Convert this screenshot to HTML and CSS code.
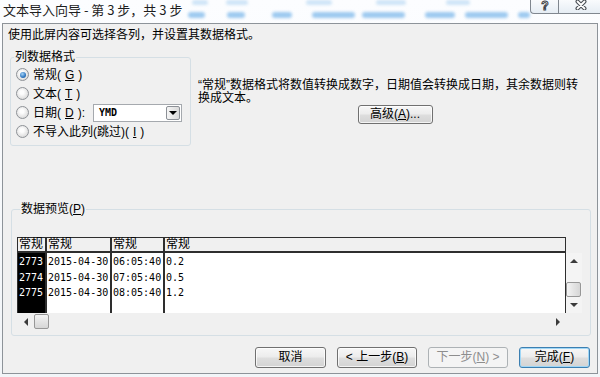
FILE: index.html
```html
<!DOCTYPE html>
<html lang="zh-CN">
<head>
    <meta charset="UTF-8">
    <title>文本导入向导 - 第 3 步，共 3 步</title>
    <link rel="stylesheet" href="styles.css">
</head>
<body>
    <div class="window">
        <div class="titlebar">
            <div class="title">文本导入向导 - 第 3 步，共 3 步</div>
            <div class="glass">
                <div class="glass-row top"><span></span><span></span><span></span><span></span><span></span></div>
                <div class="glass-row bottom"><span></span><span></span><span></span><span></span><span></span><span></span><span></span><span></span></div>
            </div>
            <div class="caption">
                <div class="cap-btn cap-help"><span>?</span></div>
                <div class="cap-btn cap-close">
                    <svg width="12" height="10" viewBox="0 0 12 10">
                        <path d="M2.5 1.5 L9.5 8.5 M9.5 1.5 L2.5 8.5" stroke="#4a4f55" stroke-width="4" stroke-linecap="round"/>
                        <path d="M2.5 1.5 L9.5 8.5 M9.5 1.5 L2.5 8.5" stroke="#fff" stroke-width="1.8" stroke-linecap="round"/>
                    </svg>
                </div>
            </div>
        </div>

        <div class="client">
            <p class="intro">使用此屏内容可选择各列，并设置其数据格式。</p>

            <div class="upper">
                <fieldset class="group format">
                    <legend>列数据格式</legend>
                    <label class="opt"><span class="radio on"></span>常规(<u>G</u>)</label>
                    <label class="opt"><span class="radio"></span>文本(<u>T</u>)</label>
                    <label class="opt"><span class="radio"></span>日期(<u>D</u>):
                        <span class="combo"><span class="combo-val">YMD</span><span class="combo-btn"></span></span>
                    </label>
                    <label class="opt"><span class="radio"></span>不导入此列(跳过)(<u>I</u>)</label>
                </fieldset>

                <div class="desc">
                    <p>“常规”数据格式将数值转换成数字，日期值会转换成日期，其余数据则转换成文本。</p>
                    <button class="btn adv">高级(<u>A</u>)...</button>
                </div>
            </div>

            <fieldset class="group preview">
                <legend>数据预览(<u>P</u>)</legend>
                <div class="grid">
                    <div class="sheet">
                        <div class="col c1">
                            <div class="head">常规</div>
                            <div class="cells"><div class="cell">2773</div><div class="cell">2774</div><div class="cell">2775</div></div>
                        </div>
                        <div class="col c2">
                            <div class="head">常规</div>
                            <div class="cells"><div class="cell">2015-04-30</div><div class="cell">2015-04-30</div><div class="cell">2015-04-30</div></div>
                        </div>
                        <div class="col c3">
                            <div class="head">常规</div>
                            <div class="cells"><div class="cell">06:05:40</div><div class="cell">07:05:40</div><div class="cell">08:05:40</div></div>
                        </div>
                        <div class="col c4">
                            <div class="head">常规</div>
                            <div class="cells"><div class="cell">0.2</div><div class="cell">0.5</div><div class="cell">1.2</div></div>
                        </div>
                    </div>
                    <div class="vscroll">
                        <span class="arrow up"></span>
                        <span class="thumb"></span>
                        <span class="arrow down"></span>
                    </div>
                    <div class="hscroll">
                        <span class="arrow left"></span>
                        <span class="thumb"></span>
                        <span class="arrow right"></span>
                    </div>
                </div>
            </fieldset>

            <div class="actions">
                <button class="btn small">取消</button>
                <button class="btn">&lt; 上一步(<u>B</u>)</button>
                <button class="btn" disabled>下一步(<u>N</u>) &gt;</button>
                <button class="btn small default">完成(<u>F</u>)</button>
            </div>
        </div>
    </div>
</body>
</html>
```

FILE: styles.css
```css
* {
    box-sizing: border-box;
}
body {
    margin: 0;
    background: #f4f7fa;
    font-family: "Liberation Sans", "Noto Sans CJK SC", sans-serif;
    font-size: 12px;
    color: #000;
}
.window {
    width: 600px;
    height: 377px;
    display: flex;
    flex-direction: column;
    overflow: hidden;
    background: linear-gradient(#fcfdff, #f2f5f8);
}

/* title bar */
.titlebar {
    height: 23px;
    flex-shrink: 0;
    display: flex;
    align-items: flex-start;
}
.title {
    padding: 1px 0 0 3px;
    font-family: "Noto Sans CJK SC", sans-serif;
    font-size: 13px;
    line-height: 17px;
    white-space: nowrap;
    color: #1e1e1e;
}
.glass {
    flex: 1;
    display: flex;
    flex-direction: column;
    gap: 7px;
    padding: 0 0 0 4px;
    filter: blur(1.6px);
    opacity: .8;
}
.glass-row {
    display: flex;
    height: 5px;
}
.glass-row span {
    height: 100%;
    border-radius: 3px;
    background: #86bdec;
}
.glass-row.top span { background: #c3def5; }
.glass-row.top span:nth-child(1) { width: 16px; margin-left: 6px; }
.glass-row.top span:nth-child(2) { width: 22px; margin-left: 18px; }
.glass-row.top span:nth-child(3) { width: 26px; margin-left: 58px; }
.glass-row.top span:nth-child(4) { width: 30px; margin-left: 44px; }
.glass-row.top span:nth-child(5) { width: 24px; margin-left: 40px; }
.glass-row.bottom { height: 6px; }
.glass-row.bottom span:nth-child(1) { width: 17px; margin-left: 2px; }
.glass-row.bottom span:nth-child(2) { width: 18px; margin-left: 22px; }
.glass-row.bottom span:nth-child(3) { width: 20px; margin-left: 27px; }
.glass-row.bottom span:nth-child(4) { width: 43px; margin-left: 20px; }
.glass-row.bottom span:nth-child(5) { width: 43px; margin-left: 7px; }
.glass-row.bottom span:nth-child(6) { width: 30px; margin-left: 20px; }
.glass-row.bottom span:nth-child(7) { width: 43px; margin-left: 10px; }
.glass-row.bottom span:nth-child(8) { width: 12px; margin-left: 10px; }
.caption {
    display: flex;
    margin-right: 3px;
}
.cap-btn {
    height: 14px;
    border: 1px solid #80878f;
    border-top: 0;
    background: linear-gradient(#f9fbfd, #e6edf4);
    display: flex;
    justify-content: center;
    align-items: flex-start;
}
.cap-help {
    width: 28px;
    border-right: 0;
    border-radius: 0 0 0 4px;
}
.cap-help span {
    font: bold 12px/13px "Liberation Sans", sans-serif;
    color: #fff;
    -webkit-text-stroke: 1px #3d4248;
}
.cap-close {
    width: 45px;
    border-radius: 0 0 4px 0;
}

/* dialog body */
.client {
    flex: 1;
    margin: 0 2px 3px 2px;
    border: 1px solid #8d9399;
    background: #f0f0f0;
    display: flex;
    flex-direction: column;
}
.intro {
    margin: 4px 0 0 5px;
    line-height: 14px;
}
.upper {
    display: flex;
    margin-top: 8px;
}
.group {
    margin: 0;
    padding: 0;
    min-width: 0;
    border: 1px solid #d5dfe5;
    border-radius: 3px;
}
.group legend {
    margin-left: 3px;
    padding: 0 1px;
    line-height: 14px;
}
.format {
    width: 181px;
    margin-left: 7px;
    padding: 1px 0 4px;
}
.opt {
    display: flex;
    align-items: center;
    gap: 4px;
    height: 19px;
    padding-left: 5px;
    line-height: 14px;
    white-space: nowrap;
}
.radio {
    flex: none;
    width: 13px;
    height: 13px;
    border: 1px solid #8e9297;
    border-radius: 50%;
    background: radial-gradient(circle at 45% 40%, #fdfdfd 20%, #dcdcdc 75%, #c8c8c8);
    display: grid;
    place-items: center;
}
.radio.on::after {
    content: "";
    width: 6px;
    height: 6px;
    border-radius: 50%;
    background: radial-gradient(circle at 40% 35%, #a5d3f7, #2f77c0 60%, #1a4f8a);
}
.combo {
    display: flex;
    width: 89px;
    height: 18px;
    margin: 0 8px 0 auto;
    border: 1px solid #a5a9ae;
    background: #fff;
}
.combo-val {
    flex: 1;
    padding-left: 5px;
    font: bold 10px/16px "DejaVu Sans Mono", monospace;
}
.combo-btn {
    width: 14px;
    margin: 1px;
    border: 1px solid #8c9096;
    border-radius: 2px;
    background: linear-gradient(90deg, #f5f5f5, #dadada);
    display: grid;
    place-items: center;
}
.combo-btn::after {
    content: "";
    border-left: 4px solid transparent;
    border-right: 4px solid transparent;
    border-top: 4px solid #000;
}
.desc {
    width: 394px;
    margin-left: 7px;
    padding-top: 29px;
    display: flex;
    flex-direction: column;
    align-items: center;
}
.desc p {
    width: 388px;
    margin: 0;
    align-self: flex-start;
    line-height: 13px;
}

/* buttons */
.btn {
    height: 21px;
    width: 80px;
    padding: 0;
    font: inherit;
    line-height: 17px;
    color: #000;
    border: 1px solid #707070;
    border-radius: 3px;
    background: linear-gradient(#f7f7f7, #ececec 48%, #dedede 52%, #d3d3d3);
    box-shadow: inset 0 0 0 1px rgba(255, 255, 255, 0.75);
}
.btn.small {
    width: 71px;
}
.btn.adv {
    width: 75px;
    height: 19px;
    margin-top: 0;
    line-height: 15px;
}
.btn.default {
    border-color: #3c7fb1;
    box-shadow: inset 0 0 0 1px #9fd6f6;
}
.btn:disabled {
    color: #8d8d8d;
    border-color: #adb2b5;
    background: #f4f4f4;
    box-shadow: none;
}

/* preview */
.preview {
    width: 580px;
    margin: 56px 0 0 8px;
    padding: 21px 0 5px 5px;
}
.grid {
    display: grid;
    grid-template-columns: 549px 16px;
    grid-template-rows: 76px 17px;
}
.sheet {
    display: flex;
    border: 1px solid #2e2e2e;
    border-bottom: 0;
    background: #fff;
    font-family: "DejaVu Sans Mono", "Noto Sans CJK SC", monospace;
    font-size: 10px;
}
.col {
    display: flex;
    flex-direction: column;
    border-right: 2px solid #2e2e2e;
}
.c1 { width: 29px; }
.c2 { width: 65px; }
.c3 { width: 53px; }
.c4 { flex: 1; border-right: 0; }
.head {
    height: 15px;
    padding-left: 1px;
    border-bottom: 2px solid #2e2e2e;
    background: #f0f0f0;
    font-family: "Liberation Sans", "Noto Sans CJK SC", sans-serif;
    font-size: 12px;
    line-height: 13px;
}
.cells {
    flex: 1;
    padding-top: 1px;
}
.c1 .cells {
    background: #000;
    color: #fff;
}
.cell {
    padding-left: 1px;
    line-height: 15.5px;
    white-space: nowrap;
}
.vscroll {
    margin-top: 16px;
    display: flex;
    flex-direction: column;
    background: #f4f4f4;
}
.hscroll {
    display: flex;
    align-items: center;
    background: #f0f0f0;
}
.arrow {
    flex: none;
    width: 16px;
    height: 16px;
    display: grid;
    place-items: center;
}
.hscroll .arrow { width: 17px; }
.arrow::after {
    content: "";
    border: 4px solid transparent;
}
.arrow.up::after { border-bottom: 4px solid #3b3b3b; border-top-width: 0; }
.arrow.down::after { border-top: 4px solid #3b3b3b; border-bottom-width: 0; }
.arrow.left::after { border-right: 4px solid #3b3b3b; border-left-width: 0; }
.arrow.right::after { border-left: 4px solid #3b3b3b; border-right-width: 0; }
.arrow.right { margin-left: auto; }
.thumb {
    flex: none;
    border: 1px solid #979797;
    border-radius: 2px;
}
.vscroll .thumb {
    width: 15px;
    height: 15px;
    margin-top: auto;
    background: linear-gradient(90deg, #f4f4f4, #e4e4e4 50%, #d6d6d6);
}
.hscroll .thumb {
    width: 15px;
    height: 15px;
    background: linear-gradient(#f4f4f4, #e4e4e4 50%, #d6d6d6);
}

.actions {
    display: flex;
    justify-content: flex-end;
    gap: 11px;
    margin-top: 11px;
    padding-right: 7px;
}
```
